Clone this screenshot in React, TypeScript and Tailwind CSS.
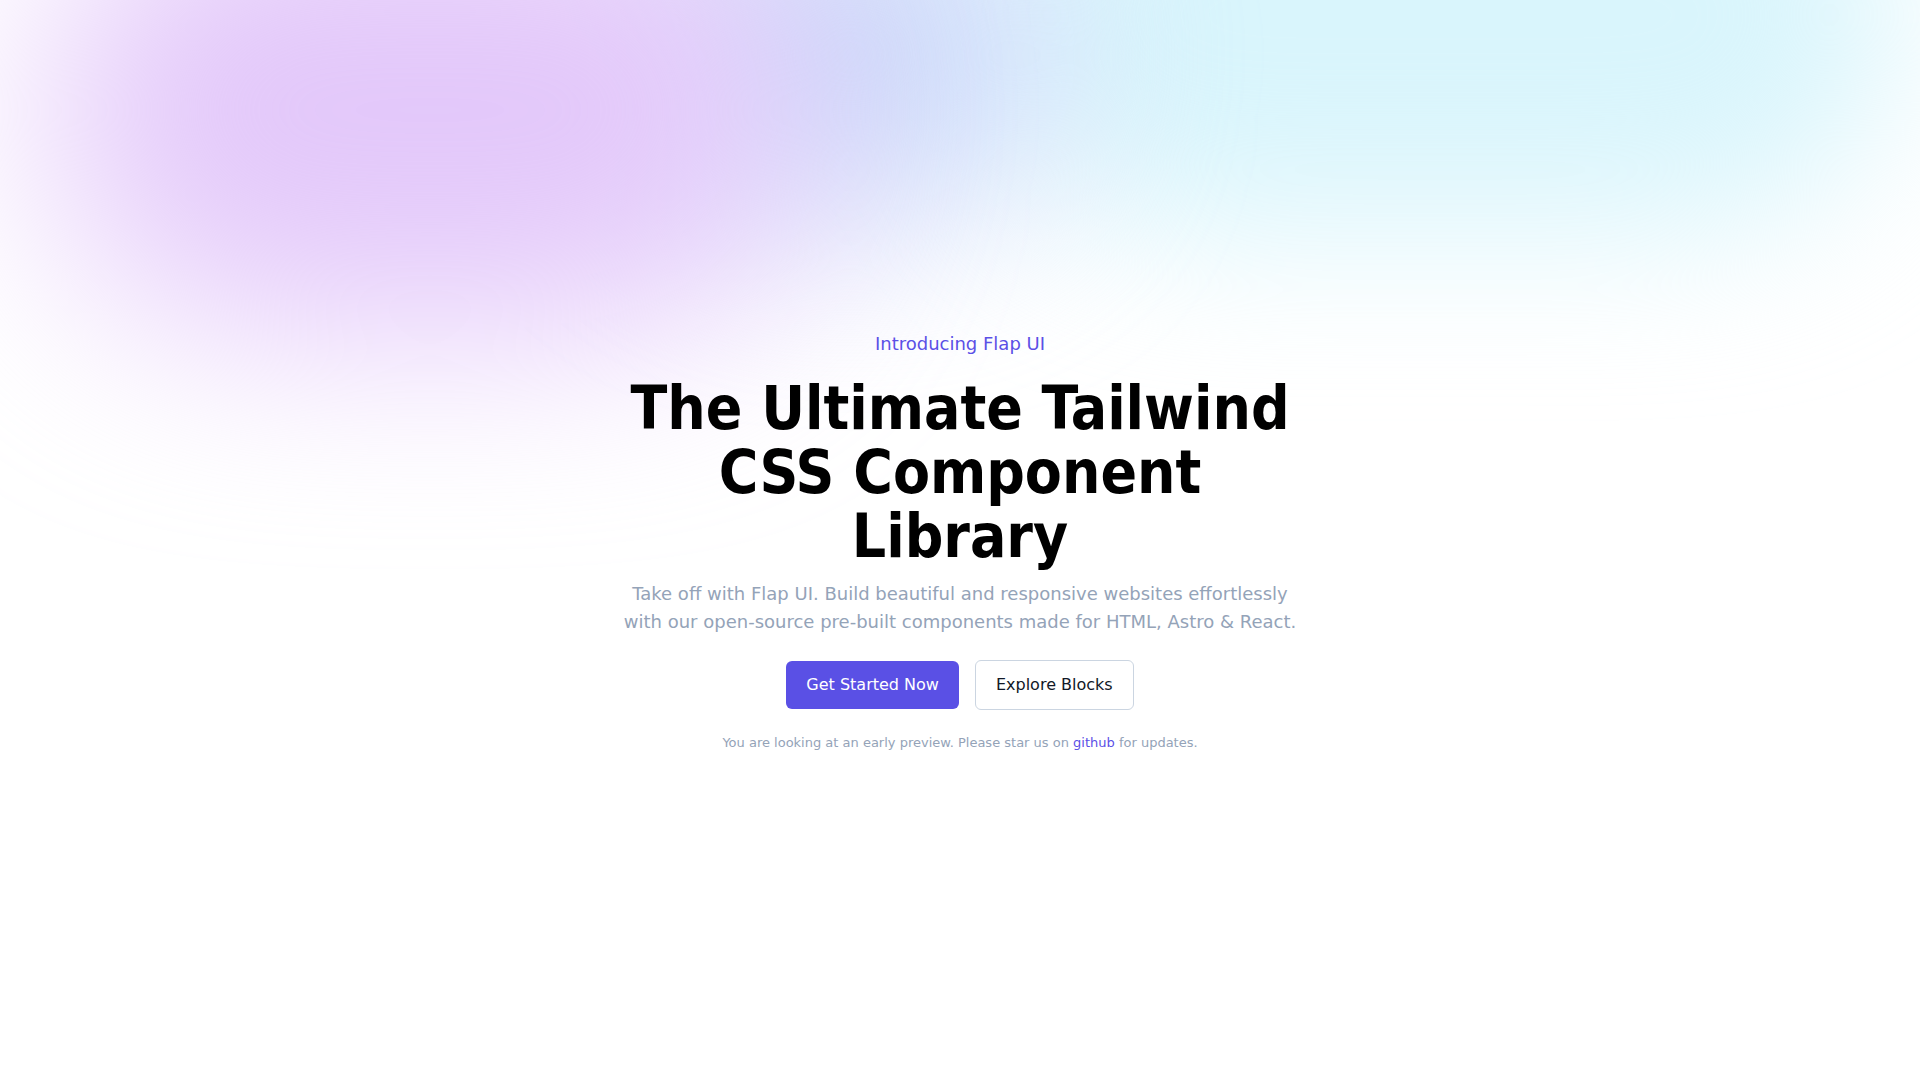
import React from "react";

export default function App() {
  return (
    <div
      className="relative min-h-screen overflow-hidden bg-white"
      style={{ fontFamily: '"DejaVu Sans", Verdana, sans-serif' }}
    >
      <div aria-hidden="true" className="pointer-events-none absolute inset-0">
        <div className="absolute left-[980px] top-[-200px] h-[430px] w-[920px] rounded-full bg-[#d9f5fc] blur-[80px]" />
        <div className="absolute left-[640px] top-[-110px] h-[330px] w-[420px] rounded-full bg-[#ccdbfa] blur-[90px]" />
        <div className="absolute left-[50px] top-[-110px] h-[440px] w-[760px] rounded-full bg-[#e3c8fa] blur-[100px]" />
      </div>

      <main className="relative flex flex-col items-center px-4 pt-[330px] text-center">
        <p className="text-lg leading-7 text-[#5b50e6]">Introducing Flap UI</p>
        <h1
          className="mt-[18px] max-w-[700px] text-[60px] font-bold leading-[64px] text-black"
          style={{ fontFamily: '"DejaVu Sans Condensed", "DejaVu Sans", sans-serif' }}
        >
          The Ultimate Tailwind CSS Component Library
        </h1>
        <p className="mt-3 max-w-[690px] text-lg leading-7 text-[#94a3b8]">
          Take off with Flap UI. Build beautiful and responsive websites effortlessly with our
          open-source pre-built components made for HTML, Astro &amp; React.
        </p>
        <div className="mt-6 flex items-center gap-4">
          <a
            href="#"
            className="rounded-md bg-[#5a50e5] px-5 py-3 text-base leading-6 text-white"
          >
            Get Started Now
          </a>
          <a
            href="#"
            className="rounded-md border border-[#cbd5e1] bg-white px-5 py-3 text-base leading-6 text-[#111827]"
          >
            Explore Blocks
          </a>
        </div>
        <p className="mt-[25px] text-[13px] leading-4 text-[#94a3b8]">
          You are looking at an early preview. Please star us on{" "}
          <a href="#" className="text-[#5b50e6]">
            github
          </a>{" "}
          for updates.
        </p>
      </main>
    </div>
  );
}
